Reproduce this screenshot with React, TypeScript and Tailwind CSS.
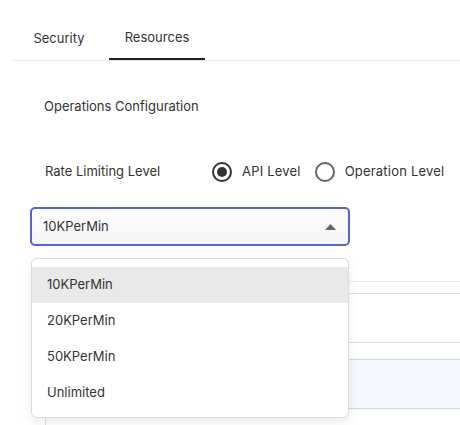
import { useState } from "react";

const options = ["10KPerMin", "20KPerMin", "50KPerMin", "Unlimited"];

function Radio({ checked, label }: { checked: boolean; label: string }) {
  return (
    <div className="flex items-center">
      <span
        className={`w-[20px] h-[20px] rounded-full border-2 flex items-center justify-center ${
          checked ? "border-[#333]" : "border-[#666]"
        }`}
      >
        {checked && <span className="w-[10px] h-[10px] rounded-full bg-[#333]" />}
      </span>
      <span className="ml-[10px] text-[13px] text-[#333] tracking-[0.2px]">{label}</span>
    </div>
  );
}

export default function App() {
  const [value] = useState("10KPerMin");

  return (
    <div className="relative w-[460px] h-[425px] bg-white overflow-hidden font-['Inter',_'Liberation_Sans',_sans-serif] text-[#333]">
      {/* Tabs */}
      <div className="ml-[13px] flex border-b border-[#e6e6e6] h-[61px]">
        <div className="w-[96px] h-[60px] flex items-center justify-center pt-[18px] text-[13px] text-[#333] pr-[4px]">
          Security
        </div>
        <div className="w-[96px] h-[60px] flex items-center justify-center pt-[18px] text-[13px] text-[#333] border-b-2 border-[#222]">
          Resources
        </div>
      </div>

      {/* Section */}
      <div className="pl-[30px]">
        <div className="mt-[37px] ml-[14px] text-[13px] leading-[16px]">Operations Configuration</div>

        <div className="mt-[48px] ml-[15px] flex items-center h-[20px]">
          <span className="text-[13px] w-[167px]">Rate Limiting Level</span>
          <div className="flex items-center gap-[14px]">
            <Radio checked label="API Level" />
            <Radio checked={false} label="Operation Level" />
          </div>
        </div>

        <div className="mt-[25px] w-[320px] h-[39px] rounded-[5px] border-2 border-[#5566cc] bg-gradient-to-b from-white to-[#f4f4f4] flex items-center justify-between pl-[11px] pr-[12px]">
          <span className="text-[13px]">{value}</span>
          <svg width="11" height="6" viewBox="0 0 11 6">
            <path d="M5.5 0 L11 6 L0 6 Z" fill="#666" />
          </svg>
        </div>

        <div className="mt-[12px] ml-[12px] text-[12px] text-[#c4c4c4] leading-[14px]">
          Select the rate limiting policy to be applied to the API
        </div>
      </div>

      {/* Table behind */}
      <div className="mt-[9px] ml-[45px] border-l border-[#ddd]">
        <div className="h-[12px] border-t border-[#ececec]" />
        <div className="h-[49px] border-t border-[#ddd]" />
        <div className="h-[17px] border-t border-[#ddd]" />
        <div className="h-[50px] border-y border-[#bfdcf6] bg-[#f3f8fe]" />
        <div className="h-[40px]" />
      </div>

      {/* Dropdown menu */}
      <div className="absolute left-[31px] top-[258px] w-[318px] rounded-[6px] border border-[#dcdcdc] bg-white shadow-[0_4px_12px_rgba(0,0,0,0.08)] pt-[8px] pb-[6px]">
        {options.map((o) => (
          <div
            key={o}
            className={`h-[36px] flex items-center pl-[15px] text-[13px] text-[#333] ${
              o === value ? "bg-[#e9e9e9]" : ""
            }`}
          >
            {o}
          </div>
        ))}
      </div>
    </div>
  );
}
